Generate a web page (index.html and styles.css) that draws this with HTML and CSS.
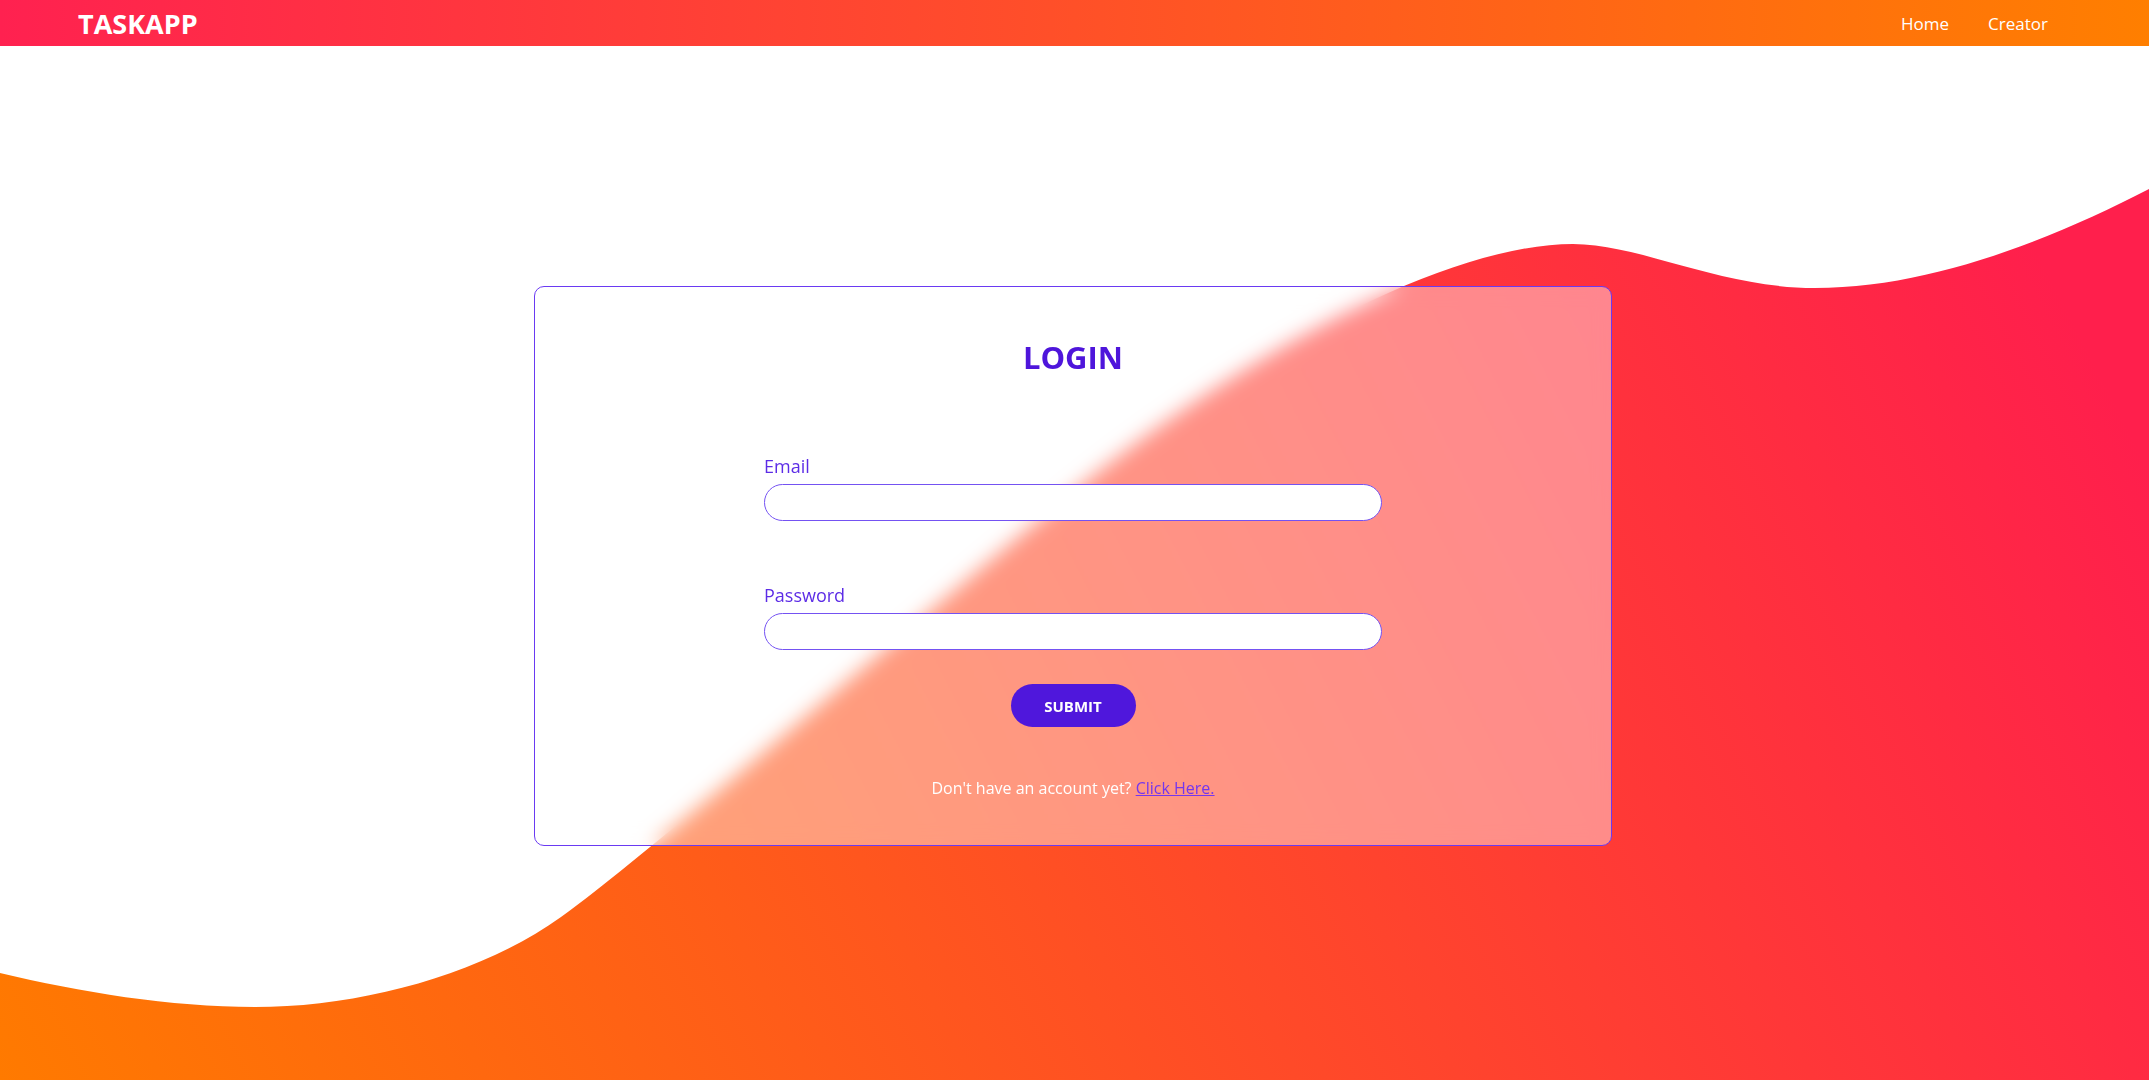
FILE: index.html
```html
<!DOCTYPE html>
<html lang="en">
<head>
<meta charset="utf-8">
<title>TaskApp - Login</title>
<link rel="stylesheet" href="styles.css">
</head>
<body>
<svg class="wave-bg" viewBox="0 0 2149 1080" preserveAspectRatio="none" aria-hidden="true">
  <defs>
    <linearGradient id="waveGrad" gradientUnits="userSpaceOnUse" x1="0" y1="1080" x2="1950" y2="80">
      <stop offset="0" stop-color="#ff7a00"/>
      <stop offset="1" stop-color="#ff1f4c"/>
    </linearGradient>
  </defs>
  <path fill="url(#waveGrad)" d="M0,973 C80,992 170,1007 255,1007 C360,1007 480,975 561,917 C661,845 950,590 1083,484 C1250,350 1450,244 1573,244 C1640,244 1720,288 1815,288 C1930,288 2050,240 2149,189 L2149,1080 L0,1080 Z"/>
</svg>
<nav class="navbar">
  <a class="brand" href="#">TASKAPP</a>
  <ul class="nav-links">
    <li><a href="#">Home</a></li>
    <li><a href="#">Creator</a></li>
  </ul>
</nav>
<main class="page">
  <section class="card">
    <h1 class="card-title">LOGIN</h1>
    <form class="login-form">
      <div class="field">
        <label for="email">Email</label>
        <input id="email" type="email">
      </div>
      <div class="field">
        <label for="password">Password</label>
        <input id="password" type="password">
      </div>
      <button type="button" class="submit">SUBMIT</button>
    </form>
    <p class="signup">Don't have an account yet? <a href="#">Click Here.</a></p>
  </section>
</main>
</body>
</html>
```
FILE: styles.css
```css
* { box-sizing: border-box; }
html, body { margin: 0; padding: 0; }
body {
  font-family: "Open Sans", "Noto Sans", sans-serif;
  background: #ffffff;
  min-height: 100vh;
  overflow: hidden;
}
.wave-bg {
  position: fixed;
  left: 0;
  top: 0;
  width: 100%;
  height: 100%;
  z-index: -1;
}
.navbar {
  height: 46px;
  display: flex;
  align-items: center;
  justify-content: space-between;
  padding: 0 101px 0 78px;
  background: linear-gradient(to right, #ff2150, #ff7f00);
}
.brand {
  color: #ffffff;
  font-size: 27px;
  font-weight: 700;
  text-decoration: none;
}
.nav-links {
  list-style: none;
  margin: 0;
  padding: 0;
  display: flex;
  gap: 39px;
}
.nav-links a {
  color: #ffffff;
  font-size: 17px;
  font-weight: 500;
  text-decoration: none;
}
.page {
  height: calc(100vh - 46px);
  padding: 6px 3px 0 0;
  display: flex;
  justify-content: center;
  align-items: center;
}
.card {
  width: 1078px;
  height: 560px;
  border: 1px solid #6a3af2;
  border-radius: 10px;
  background: rgba(255, 255, 255, 0.42);
  backdrop-filter: blur(10px);
  -webkit-backdrop-filter: blur(10px);
  padding-top: 50px;
  display: flex;
  flex-direction: column;
  align-items: center;
}
.card-title {
  margin: 0;
  font-size: 31px;
  line-height: 40px;
  font-weight: 700;
  color: #4e15db;
}
.login-form {
  width: 618px;
  margin-top: 77px;
  display: flex;
  flex-direction: column;
}
.field + .field { margin-top: 62px; }
.field label {
  display: block;
  font-size: 18px;
  line-height: 24px;
  font-weight: 500;
  color: #5c2ce6;
  margin-bottom: 6px;
}
.field input {
  display: block;
  width: 100%;
  height: 37px;
  border: 1.5px solid #7452f2;
  border-radius: 19px;
  background: #ffffff;
  outline: none;
  padding: 0 16px;
  font: inherit;
}
.submit {
  align-self: center;
  margin-top: 34px;
  width: 125px;
  height: 43px;
  border: none;
  border-radius: 22px;
  background: #4f17dc;
  color: #ffffff;
  font-family: inherit;
  font-size: 15px;
  font-weight: 700;
  cursor: pointer;
}
.signup {
  margin: 51px 0 0;
  font-size: 16px;
  line-height: 21px;
  color: #ffffff;
}
.signup a {
  color: #7436ee;
  text-decoration: underline;
}
```
